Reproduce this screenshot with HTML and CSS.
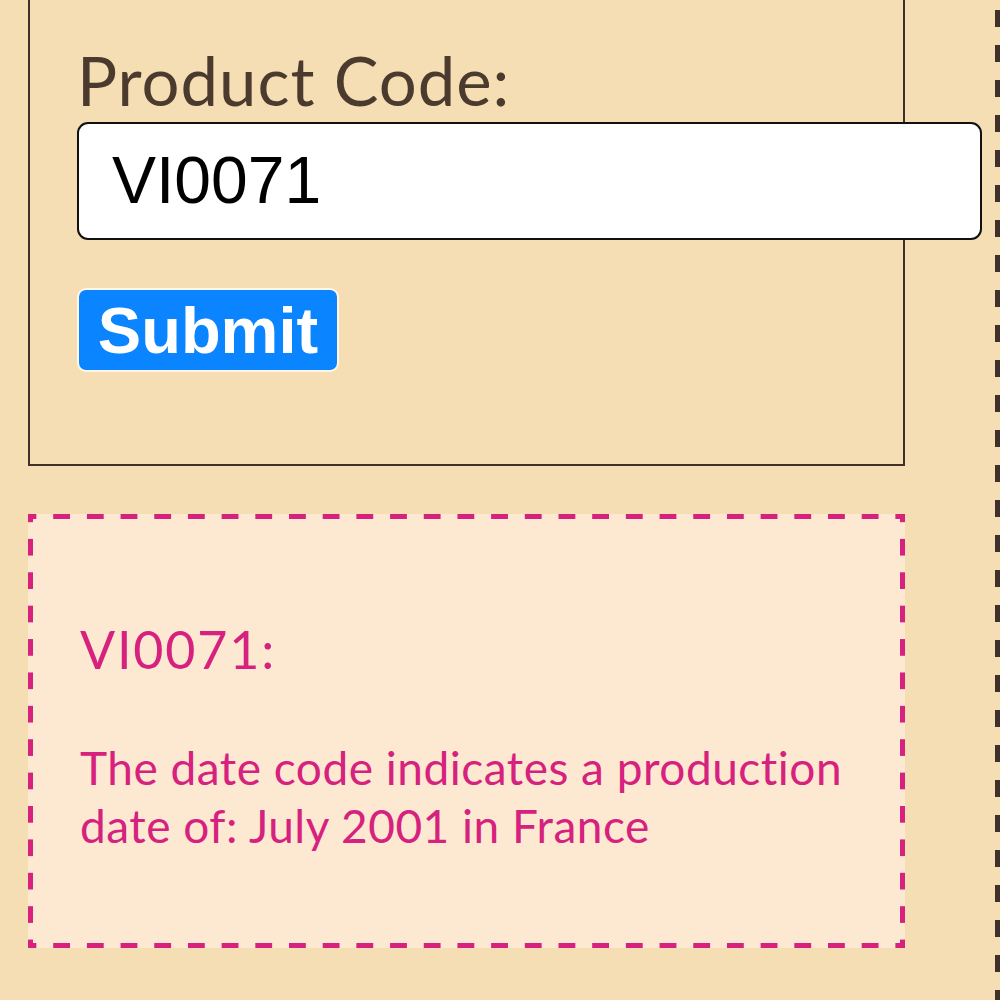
FILE: index.html
```html
<!DOCTYPE html>
<html lang="en">
<head>
<meta charset="utf-8">
<title>Date Code Lookup</title>
<link rel="stylesheet" href="styles.css">
</head>
<body>
<div class="page">
  <form class="lookup">
    <label class="lookup-label" for="code">Product Code:</label>
    <input class="lookup-input" id="code" type="text" value="VI0071">
    <button class="lookup-submit" type="button">Submit</button>
  </form>
  <section class="result">
    <h2 class="result-title">VI0071:</h2>
    <p class="result-text">The date code indicates a production date of: July 2001 in France</p>
  </section>
</div>
</body>
</html>
```
FILE: styles.css
```css
html, body {
  margin: 0;
  padding: 0;
  background: #f5deb3;
}
body {
  font-family: "Lato", "Open Sans", sans-serif;
  font-variant-ligatures: none;
  overflow: hidden;
  height: 1000px;
}
.page {
  box-sizing: border-box;
  width: 1000px;
  height: 1000px;
  padding-left: 28px;
  background:
    linear-gradient(180deg, #3f3129 0 17px, transparent 17px) right 10px / 5px 35px repeat-y;
}
.lookup {
  box-sizing: border-box;
  width: 877px;
  height: 466px;
  border: 2px solid #3f3129;
  border-top: none;
  padding: 42px 0 0 47px;
  display: flex;
  flex-direction: column;
  align-items: flex-start;
}
.lookup-label {
  color: #4a3b2e;
  font-size: 67px;
  line-height: 76px;
  letter-spacing: 1px;
}
.lookup-input {
  box-sizing: border-box;
  width: 905px;
  height: 118px;
  margin-top: 4px;
  border: 2px solid #111;
  border-radius: 11px;
  background: #fff;
  padding: 0 0 2px 33px;
  font-family: "Liberation Sans", Arial, sans-serif;
  font-size: 66px;
  color: #000;
  outline: none;
  position: relative;
  z-index: 1;
}
.lookup-submit {
  box-sizing: border-box;
  margin-top: 48px;
  width: 262px;
  height: 84px;
  border: 2px solid #fff6e8;
  border-radius: 9px;
  background: #0a84ff;
  color: #fff;
  font-family: "Liberation Sans", Arial, sans-serif;
  font-weight: bold;
  font-size: 65px;
  padding: 0;
}
.result {
  box-sizing: border-box;
  width: 877px;
  height: 434px;
  margin-top: 48px;
  padding: 105px 40px 0 52px;
  color: #d6217e;
  background-color: #fde9d1;
  background-image:
    linear-gradient(90deg, #d6217e 0 17px, transparent 17px),
    linear-gradient(90deg, #d6217e 0 17px, transparent 17px),
    linear-gradient(180deg, #d6217e 0 17px, transparent 17px),
    linear-gradient(180deg, #d6217e 0 17px, transparent 17px);
  background-size: 33.7px 5px, 33.7px 5px, 5px 33.4px, 5px 33.4px;
  background-position: -8.5px top, -8.5px bottom, left -8.5px, right -8.5px;
  background-repeat: repeat-x, repeat-x, repeat-y, repeat-y;
}
.result-title {
  margin: 0;
  font-weight: normal;
  font-size: 52px;
  line-height: 60px;
  letter-spacing: 1.8px;
}
.result-text {
  margin: 60px 0 0;
  font-size: 46px;
  line-height: 58px;
  letter-spacing: 0.5px;
}
```
